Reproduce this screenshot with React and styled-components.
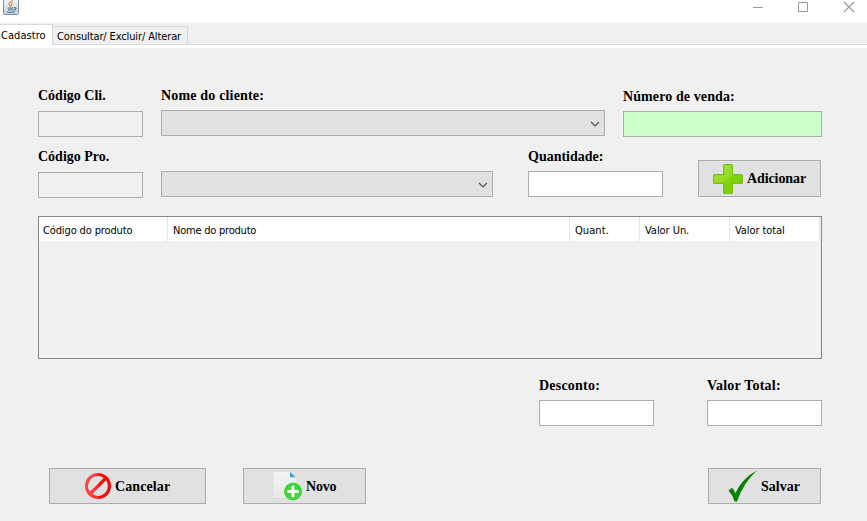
import React from "react";
import styled, { createGlobalStyle } from "styled-components";

const GlobalStyle = createGlobalStyle`
  * { box-sizing: border-box; }
  body { margin: 0; background: #f0f0f0; overflow: hidden; }
`;

const Window = styled.div`
  display: flex;
  flex-direction: column;
  width: 867px;
  height: 521px;
  overflow: hidden;
  background: #f0f0f0;
  color: #000;
  font-family: "DejaVu Sans Condensed", "DejaVu Sans", sans-serif;
  font-stretch: condensed;
  font-size: 11px;
`;

const TitleBar = styled.header`
  display: flex;
  justify-content: space-between;
  flex: none;
  height: 23px;
  padding-left: 3px;
  background: #fff;
`;

const WindowControls = styled.div`
  display: flex;
  gap: 33px;
  padding: 0 12px 0 0;
  svg { display: block; }
`;

const TabStrip = styled.nav`
  display: flex;
  align-items: flex-end;
  flex: none;
  height: 25px;
  padding-bottom: 3px;
  background: linear-gradient(#f0f0f0 21px, #d9d9d9 21px, #d9d9d9 22px, #fff 22px);
`;

const Tab = styled.button`
  flex: none;
  width: ${(p) => p.$width}px;
  height: ${(p) => (p.$active ? 21 : 19)}px;
  padding: ${(p) => (p.$active ? "0 0 0 1px" : "1px 0 0 4px")};
  border: 1px solid #d9d9d9;
  border-width: ${(p) => (p.$active ? "1px 1px 0 0" : "1px 1px 1px 0")};
  background: ${(p) => (p.$active ? "#fff" : "#f0f0f0")};
  font: inherit;
  line-height: ${(p) => (p.$active ? 19 : 18)}px;
  letter-spacing: ${(p) => p.$spacing}px;
  text-align: left;
  white-space: nowrap;
`;

const Form = styled.main`
  display: flex;
  flex-direction: column;
  padding: 39px 45px 0 38px;
`;

const FieldRow = styled.div`
  display: flex;
  flex: none;
  height: ${(p) => p.$height}px;
  justify-content: ${(p) => p.$justify || "flex-start"};
`;

const Field = styled.label`
  display: flex;
  flex-direction: column;
  flex: none;
  width: ${(p) => p.$width}px;
  margin-left: ${(p) => p.$before || 0}px;
  padding-top: ${(p) => p.$top || 0}px;
`;

const Caption = styled.span`
  height: ${(p) => p.$height || 24}px;
  font: bold 14px/18px "Liberation Serif", "Times New Roman", serif;
  letter-spacing: ${(p) => p.$spacing || 0}px;
  white-space: nowrap;
`;

const TextInput = styled.input`
  width: 100%;
  height: 26px;
  padding: 0 4px;
  border: 1px solid #abadb3;
  outline: 0;
  background: ${(p) => p.$fill || "#fff"};
`;

const Combo = styled.div`
  display: flex;
  align-items: center;
  justify-content: flex-end;
  height: 26px;
  padding: 2px 4px 0 0;
  border: 1px solid #adadb2;
  background: #e1e1e1;
`;

const ActionButton = styled.button`
  display: flex;
  align-items: center;
  flex: none;
  width: ${(p) => p.$width}px;
  height: ${(p) => p.$height || 36}px;
  margin: ${(p) => p.$margin || 0};
  padding: 0 0 0 ${(p) => p.$inset}px;
  gap: ${(p) => p.$gap || 4}px;
  border: 1px solid #adadad;
  background: #e1e1e1;
  color: #000;
  font: bold 14px/16px "Liberation Serif", "Times New Roman", serif;
  letter-spacing: ${(p) => p.$spacing || 0}px;
  svg { flex: none; }
`;

const ButtonText = styled.span`
  padding-top: ${(p) => p.$drop || 0}px;
`;

const TableFrame = styled.section`
  flex: none;
  width: 784px;
  height: 143px;
  margin-top: 18px;
  border: 1px solid #828790;
`;

const TableHeader = styled.div`
  display: grid;
  grid-template-columns: 129px 402px 70px 90px 90px;
  width: 782px;
  height: 24px;
  background: linear-gradient(#fff, #fff) no-repeat 0 0 / 781px 24px;
`;

const HeaderCell = styled.div`
  height: 24px;
  padding-left: 5px;
  border-right: 1px solid #e5e5e5;
  line-height: 28px;
  letter-spacing: ${(p) => p.$spacing || 0}px;
  white-space: nowrap;

  &:first-child { padding-left: 4px; }
`;

const Footer = styled.footer`
  display: flex;
  margin: 42px 0 0 11px;
`;

const JavaIcon = () => (
  <svg width="16" height="16" viewBox="0 0 16 16">
    <defs>
      <linearGradient id="cup" x2="0" y2="1">
        <stop stopColor="#f4f6f8" />
        <stop offset="1" stopColor="#c5d2dc" />
      </linearGradient>
    </defs>
    <path d="M.5-1V13.5Q.5 14.5 1.5 14.5H14.5Q15.5 14.5 15.5 13.5V-1" fill="url(#cup)" stroke="#7590a6" />
    <path d="M9 0C9.5 2 5.5 2.6 6 4.4c.2 1 1.7 1.2 1.2 2.4M10.5 2.5C8 3.5 8 4.6 8.8 6.4" fill="none" stroke="#ee8b3a" strokeWidth="1.2" />
    <path d="M4.5 8H10.5M5 9.8H10.3M3.5 11.7Q8 12.9 12 11.4M11 7.6Q14 7.4 12.7 9.2L11 10" fill="none" stroke="#4d728f" strokeWidth="1.1" />
  </svg>
);

const Minimize = () => (
  <svg width="12" height="14" viewBox="0 0 12 14"><path d="M0 7.5H10" stroke="#999" /></svg>
);
const Maximize = () => (
  <svg width="12" height="14" viewBox="0 0 12 14"><path d="M.5 2.5H9.5V11.5H.5Z" fill="none" stroke="#999" /></svg>
);
const Close = () => (
  <svg width="12" height="14" viewBox="0 0 12 14"><path d="M1 2L11 12M11 2L1 12" stroke="#999" strokeWidth="1.1" /></svg>
);
const Chevron = () => (
  <svg width="10" height="6" viewBox="0 0 10 6"><path d="M1 1L5 5L9 1" fill="none" stroke="#505050" strokeWidth="1.2" /></svg>
);

const PlusIcon = () => (
  <svg width="30" height="30" viewBox="0 0 30 30">
    <defs>
      <linearGradient id="plus" x2="1" y2="1">
        <stop stopColor="#b0eb35" />
        <stop offset=".45" stopColor="#94db20" />
        <stop offset=".55" stopColor="#7ed00b" />
        <stop offset="1" stopColor="#80d305" />
      </linearGradient>
    </defs>
    <path d="M11.5.7H18.5Q19.4.7 19.4 1.6V10.6H28.4Q29.3 10.6 29.3 11.5V18.5Q29.3 19.4 28.4 19.4H19.4V28.4Q19.4 29.3 18.5 29.3H11.5Q10.6 29.3 10.6 28.4V19.4H1.6Q.7 19.4.7 18.5V11.5Q.7 10.6 1.6 10.6H10.6V1.6Q10.6.7 11.5.7Z" fill="url(#plus)" stroke="#75bf16" strokeWidth="1.2" />
  </svg>
);

const CancelIcon = () => (
  <svg width="26" height="26" viewBox="0 0 26 26">
    <defs>
      <linearGradient id="ban" x2="1">
        <stop stopColor="#ff4545" />
        <stop offset=".48" stopColor="#ff3030" />
        <stop offset=".55" stopColor="#ff0808" />
        <stop offset="1" stopColor="#f00" />
      </linearGradient>
    </defs>
    <path fillRule="evenodd" fill="url(#ban)" d="M13 0A13 13 0 1 1 13 26A13 13 0 1 1 13 0ZM13 3.1A9.9 9.9 0 0 0 4.9 18.7L18.7 4.9A9.9 9.9 0 0 0 13 3.1ZM21.1 7.3L7.3 21.1A9.9 9.9 0 0 0 21.1 7.3Z" />
  </svg>
);

const NewIcon = () => (
  <svg width="30" height="30" viewBox="0 0 30 30">
    <defs>
      <linearGradient id="page" x2="0" y2="1">
        <stop stopColor="#f4f4f4" />
        <stop offset="1" stopColor="#e8e8e8" />
      </linearGradient>
    </defs>
    <path d="M.5 1H17L22.5 6.5V27.5H.5Z" fill="url(#page)" />
    <path d="M.5 27.5H14" stroke="#d8d8d8" />
    <path d="M17 1L22.5 6.3H17Z" fill="#429dcc" />
    <circle cx="20" cy="20.5" r="9" fill="#42d33b" />
    <path d="M20 16V25M15.5 20.5H24.5" stroke="#fff" strokeWidth="3" strokeLinecap="round" />
  </svg>
);

const CheckIcon = () => (
  <svg width="30" height="32" viewBox="0 0 30 32">
    <path d="M.5 20.5L4.2 17.8Q6.3 19.8 7.2 23.2Q15 7.5 29 .5Q15.5 12.5 9 31.5H6.5Q5 25.5 .5 20.5Z" fill="#078207" />
  </svg>
);

export default function App() {
  return (
    <>
      <GlobalStyle />
      <Window>
        <TitleBar>
          <JavaIcon />
          <WindowControls>
            <Minimize />
            <Maximize />
            <Close />
          </WindowControls>
        </TitleBar>
        <TabStrip>
          <Tab $active $width={53} $spacing={0.05}>Cadastro</Tab>
          <Tab $width={135} $spacing={-0.12}>Consultar/ Excluir/ Alterar</Tab>
        </TabStrip>
        <Form>
          <FieldRow $height={61}>
            <Field $width={105}>
              <Caption>Código Cli.</Caption>
              <TextInput $fill="#f0f0f0" readOnly />
            </Field>
            <Field $width={444} $before={18}>
              <Caption $height={23} $spacing={0.17}>Nome do cliente:</Caption>
              <Combo><Chevron /></Combo>
            </Field>
            <Field $width={199} $before={18} $top={1}>
              <Caption $height={23} $spacing={0.1}>Número de venda:</Caption>
              <TextInput $fill="#ccffcc" />
            </Field>
          </FieldRow>
          <FieldRow $height={50}>
            <Field $width={105}>
              <Caption>Código Pro.</Caption>
              <TextInput $fill="#f0f0f0" readOnly />
            </Field>
            <Field $width={332} $before={18} $top={23}>
              <Combo><Chevron /></Combo>
            </Field>
            <Field $width={135} $before={35}>
              <Caption $height={23}>Quantidade:</Caption>
              <TextInput />
            </Field>
            <ActionButton $width={123} $height={37} $margin="12px 0 0 35px" $inset={14} $spacing={-0.1}>
              <PlusIcon /><ButtonText>Adicionar</ButtonText>
            </ActionButton>
          </FieldRow>
          <TableFrame>
            <TableHeader>
              <HeaderCell $spacing={-0.13}>Código do produto</HeaderCell>
              <HeaderCell $spacing={-0.22}>Nome do produto</HeaderCell>
              <HeaderCell $spacing={0.08}>Quant.</HeaderCell>
              <HeaderCell $spacing={-0.05}>Valor Un.</HeaderCell>
              <HeaderCell $spacing={-0.08}>Valor total</HeaderCell>
            </TableHeader>
          </TableFrame>
          <FieldRow $height={67} $justify="flex-end">
            <Field $width={115} $top={18}>
              <Caption $height={23} $spacing={0.22}>Desconto:</Caption>
              <TextInput />
            </Field>
            <Field $width={115} $before={53} $top={18}>
              <Caption $height={23} $spacing={0.22}>Valor Total:</Caption>
              <TextInput />
            </Field>
          </FieldRow>
          <Footer>
            <ActionButton $width={157} $inset={35} $spacing={0.1}><CancelIcon /><ButtonText $drop={2}>Cancelar</ButtonText></ActionButton>
            <ActionButton $width={123} $margin="0 0 0 37px" $inset={29} $gap={3} $spacing={-0.2}><NewIcon /><ButtonText $drop={2}>Novo</ButtonText></ActionButton>
            <ActionButton $width={113} $margin="0 0 0 342px" $inset={19} $gap={3}><CheckIcon /><ButtonText $drop={2}>Salvar</ButtonText></ActionButton>
          </Footer>
        </Form>
      </Window>
    </>
  );
}
